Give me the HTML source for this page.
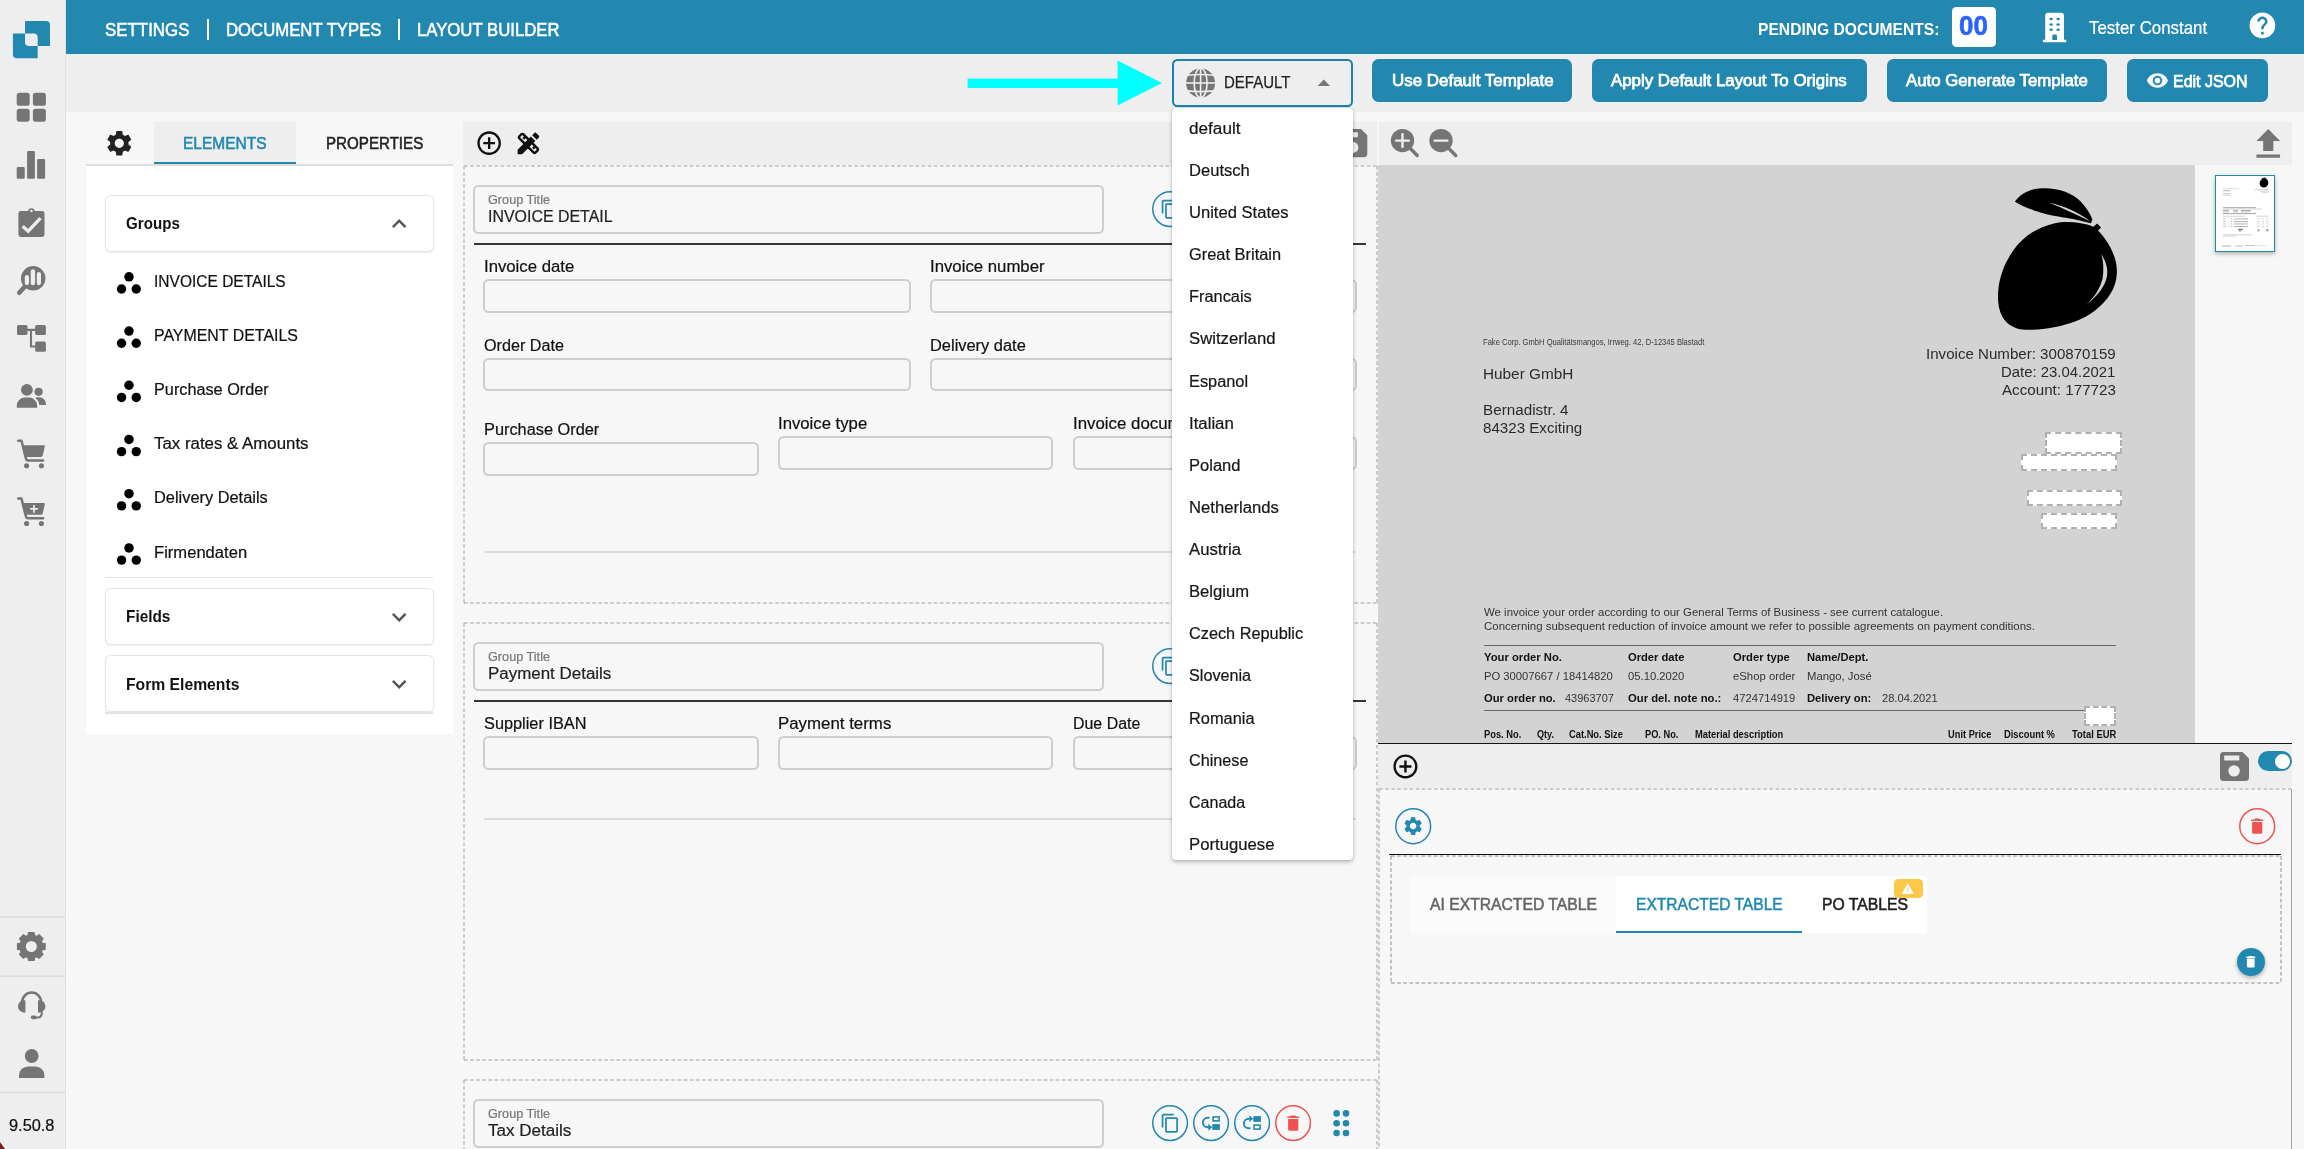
<!DOCTYPE html>
<html lang="en">
<head>
<meta charset="utf-8">
<title>Layout Builder</title>
<style>
*{box-sizing:border-box;margin:0;padding:0}
html,body{width:2304px;height:1149px;overflow:hidden;background:#f7f7f7;font-family:"Liberation Sans",sans-serif;color:#111}
.a{position:absolute}
.t{position:absolute;white-space:nowrap;line-height:1}
svg{position:absolute;overflow:visible}
#side{left:0;top:0;width:66px;height:1149px;background:#eeeeee;border-right:1.5px solid #e0e0e0}
#top{left:66px;top:0;width:2238px;height:54px;background:#2288b0}
#bar2{left:66px;top:54px;width:2238px;height:58px;background:#eeeeee}
.dash{position:absolute;border:1.4px dashed #bdbdbd}
.inp{position:absolute;border:2px solid #cecece;border-radius:5.5px}
</style>
</head>
<body>
<div id="root" class="a" style="left:0;top:0;width:2304px;height:1149px;will-change:transform">
<div id="side" class="a"></div>
<div id="top" class="a"></div>
<div id="bar2" class="a"></div>
<!-- sidebar -->
<svg style="left:0;top:0" width="66" height="1149" viewBox="0 0 66 1149">
<path fill="#2288b0" d="M25.3,21.1 H46 A4,4 0 0 1 50,25.1 V45.60000000000001 A0.3,0.3 0 0 1 49.7,45.900000000000006 H25.3 A0.3,0.3 0 0 1 25,45.60000000000001 V21.400000000000002 A0.3,0.3 0 0 1 25.3,21.1Z"/><path fill="#2288b0" d="M13.200000000000001,33.4 H37.400000000000006 A0.3,0.3 0 0 1 37.7,33.699999999999996 V57.900000000000006 A0.3,0.3 0 0 1 37.400000000000006,58.2 H16.9 A4,4 0 0 1 12.9,54.2 V33.699999999999996 A0.3,0.3 0 0 1 13.200000000000001,33.4Z"/><path fill="#eeeeee" d="M25.2,33.4 H33.7 A4,4 0 0 1 37.7,37.4 V45.699999999999996 A0.2,0.2 0 0 1 37.5,45.9 H29 A4,4 0 0 1 25,41.9 V33.6 A0.2,0.2 0 0 1 25.2,33.4Z"/>
<rect x="16.7" y="92.8" width="13" height="13" rx="2.6" fill="#757575"/><rect x="32.9" y="92.8" width="13" height="13" rx="2.6" fill="#757575"/><rect x="16.7" y="108.7" width="13" height="13" rx="2.6" fill="#757575"/><rect x="32.9" y="108.7" width="13" height="13" rx="2.6" fill="#757575"/>
<rect x="16.7" y="166.9" width="8" height="11.8" rx="1.2" fill="#757575"/><rect x="27.1" y="151" width="7.8" height="27.7" rx="1.2" fill="#757575"/><rect x="37.1" y="158.9" width="8" height="19.8" rx="1.2" fill="#757575"/>
<line x1="24.6" y1="286.8" x2="19.3" y2="292.7" stroke="#757575" stroke-width="4.6" stroke-linecap="round"/><circle cx="33.2" cy="278.3" r="12.25" fill="#757575"/><rect x="24.8" y="275" width="4.2" height="10.2" rx="2.1" fill="#eee"/><rect x="30.7" y="269.2" width="4.4" height="16" rx="2.2" fill="#eee"/><rect x="36.8" y="272" width="4.2" height="13.2" rx="2.1" fill="#eee"/>
<rect x="18.400" y="211.100" width="26.100" height="25.800" rx="2.400" fill="#757575"/><circle cx="31.400" cy="211.600" r="3.300" fill="#757575"/><circle cx="31.400" cy="211" r="1.250" fill="#eee"/><path d="M22.600 226.200 L28.200 231.200 L40.500 218.100" fill="none" stroke="#eee" stroke-width="3.300"/>
<rect x="17" y="325" width="10.500" height="10.100" rx="1.600" fill="#757575"/><rect x="35.200" y="325" width="10.700" height="10.100" rx="1.600" fill="#757575"/><rect x="35.200" y="341.400" width="10.700" height="10.400" rx="1.600" fill="#757575"/><path d="M27 329.850 H36 M31 329.850 V346.550 H36" fill="none" stroke="#757575" stroke-width="2.100"/>
<circle cx="26.9" cy="389.9" r="5.9" fill="#757575"/><path fill="#757575" d="M16.8 407.8 v-2.2 a8 8 0 0 1 8-8 h4.3 a8 8 0 0 1 8 8 v2.2z"/><circle cx="38.6" cy="391.8" r="4.1" fill="#757575"/><path fill="#757575" d="M35.2 397.9 c1.2-.5 2.4-.6 3.4-.6 h1 a6.3 6.3 0 0 1 6.3 6.3 v1.5 h-6.6 c0-3-1.600-5.600-4.100-7.200z"/>
<g transform="translate(0,0)"><path d="M18.2 440.700 h3.300 l4.400 17.600 q0.400 2.200 2.400 2.200 h14.800" fill="none" stroke="#757575" stroke-width="2.500" stroke-linecap="round" stroke-linejoin="round"/><path d="M21.700 445.200 h22 q1.400 0 1.100 1.400 l-2.100 9 q-0.400 1.400 -1.800 1.400 h-16.400z" fill="#757575"/><circle cx="26.600" cy="465.700" r="2.550" fill="#757575"/><circle cx="41.400" cy="465.700" r="2.550" fill="#757575"/></g><g transform="translate(0,57.8)"><path d="M18.2 440.700 h3.300 l4.400 17.600 q0.400 2.200 2.400 2.200 h14.800" fill="none" stroke="#757575" stroke-width="2.500" stroke-linecap="round" stroke-linejoin="round"/><path d="M21.700 445.200 h22 q1.400 0 1.100 1.400 l-2.100 9 q-0.400 1.400 -1.800 1.400 h-16.400z" fill="#757575"/><circle cx="26.600" cy="465.700" r="2.550" fill="#757575"/><circle cx="41.400" cy="465.700" r="2.550" fill="#757575"/><rect x="30.100" y="450.200" width="7.800" height="1.700" fill="#eee"/><rect x="33.150" y="447.150" width="1.700" height="7.800" fill="#eee"/></g>
<rect x="0" y="916.1" width="65" height="1.6" fill="#dcdcdc"/><rect x="0" y="975.5" width="65" height="1.6" fill="#dcdcdc"/><rect x="0" y="1091.6000000000001" width="65" height="1.6" fill="#dcdcdc"/><path fill="#757575" stroke="#757575" stroke-width="1.2" stroke-linejoin="round" fill-rule="evenodd" d="M28.03,935.47 L28.49,932.68 L34.11,932.68 L34.57,935.47 L36.79,936.39 L39.08,934.74 L43.06,938.72 L41.41,941.01 L42.33,943.23 L45.12,943.69 L45.12,949.31 L42.33,949.77 L41.41,951.99 L43.06,954.28 L39.08,958.26 L36.79,956.61 L34.57,957.53 L34.11,960.32 L28.49,960.32 L28.03,957.53 L25.81,956.61 L23.52,958.26 L19.54,954.28 L21.19,951.99 L20.27,949.77 L17.48,949.31 L17.48,943.69 L20.27,943.23 L21.19,941.01 L19.54,938.72 L23.52,934.74 L25.81,936.39Z M37.40,946.50 A6.1,6.1 0 1,0 25.20,946.50 A6.1,6.1 0 1,0 37.40,946.50Z"/>
<path fill="none" stroke="#757575" stroke-width="2.6" d="M22.200 1003.500 v-1.500 a9.450 9.450 0 0 1 18.900 0 v1.500"/><path fill="#757575" d="M25.400 1000.200 v12.200 h-1.800 a5.600 6.100 0 0 1 0 -12.200z M38 1000.200 v12.200 h1.800 a5.600 6.100 0 0 0 0 -12.200z"/><path fill="none" stroke="#757575" stroke-width="2.2" d="M41.700 1011.500 v2.300 a3.700 3.700 0 0 1 -3.700 3.700 h-3"/><rect x="30.800" y="1015.600" width="5.900" height="3.700" rx="1.800" fill="#757575"/>
<circle cx="31.7" cy="1056" r="6.9" fill="#757575"/><path fill="#757575" d="M19 1078 v-2.600 a9 9 0 0 1 9-9 h7.400 a9 9 0 0 1 9 9 v2.600z"/>
<path fill="#7a1c1c" d="M0 1142 L5 1149 L0 1149Z"/></svg>
<div class="t" style="top:1116px;font-size:16.72px;line-height:19px;color:#111;left:8.70px;transform:scaleX(0.9787);transform-origin:0 0;-webkit-text-stroke:0.22px;">9.50.8</div>
<!-- top bar -->
<div class="t" style="top:19px;font-size:19.11px;line-height:21px;color:#fff;-webkit-text-stroke:0.55px;left:105.20px;transform:scaleX(0.8832);transform-origin:0 0;">SETTINGS</div>
<div class="a" style="left:206.60px;top:19.40px;width:2.20px;height:20.60px;background:#fff"></div>
<div class="t" style="top:19px;font-size:19.11px;line-height:21px;color:#fff;-webkit-text-stroke:0.55px;left:225.50px;transform:scaleX(0.8751);transform-origin:0 0;">DOCUMENT TYPES</div>
<div class="a" style="left:398.00px;top:19.40px;width:2.20px;height:20.60px;background:#fff"></div>
<div class="t" style="top:19px;font-size:19.11px;line-height:21px;color:#fff;-webkit-text-stroke:0.55px;left:416.70px;transform:scaleX(0.8751);transform-origin:0 0;">LAYOUT BUILDER</div>
<div class="t" style="top:20px;font-size:17.01px;line-height:19px;color:#fff;font-weight:700;left:1757.90px;transform:scaleX(0.9194);transform-origin:0 0;">PENDING DOCUMENTS:</div>
<div class="a" style="left:1951.50px;top:6.90px;width:44.10px;height:40.20px;background:#fff;border-radius:4.5px"></div>
<div class="t" style="top:10px;font-size:27.91px;line-height:31px;color:#2962ff;font-weight:700;left:1959.10px;transform:scaleX(0.9309);transform-origin:0 0;-webkit-text-stroke:0.6px;">00</div>
<svg style="left:0;top:0" width="2304" height="54" viewBox="0 0 2304 54"><path fill="#fff" d="M2045.200 40.500 V15.800 a3 3 0 0 1 3-3 h12.800 a3 3 0 0 1 3 3 V40.500z"/><rect x="2042.800" y="39.700" width="23.600" height="2.500" rx="1.200" fill="#fff"/><ellipse cx="2051.1" cy="19" rx="1.750" ry="1.250" fill="#2288b0"/><ellipse cx="2051.1" cy="24.4" rx="1.750" ry="1.250" fill="#2288b0"/><ellipse cx="2051.1" cy="29.7" rx="1.750" ry="1.250" fill="#2288b0"/><ellipse cx="2058.1" cy="19" rx="1.750" ry="1.250" fill="#2288b0"/><ellipse cx="2058.1" cy="24.4" rx="1.750" ry="1.250" fill="#2288b0"/><ellipse cx="2058.1" cy="29.7" rx="1.750" ry="1.250" fill="#2288b0"/><path fill="#2288b0" d="M2052.300 39.900 v-4 a1.400 1.400 0 0 1 1.400-1.400 h1.900 a1.400 1.400 0 0 1 1.400 1.400 v4z"/></svg>
<div class="t" style="top:17px;font-size:18.46px;line-height:21px;color:#fff;left:2089.30px;transform:scaleX(0.9150);transform-origin:0 0;-webkit-text-stroke:0.22px;">Tester Constant</div>
<svg style="left:2246.60px;top:10.10px;" width="30.80" height="30.80" viewBox="0 0 24 24"><path fill="#fff" d="M12 2C6.480 2 2 6.480 2 12s4.480 10 10 10 10-4.480 10-10S17.520 2 12 2zm1 17h-2v-2h2v2zm2.070-7.750l-.9.92C13.450 12.900 13 13.500 13 15h-2v-.5c0-1.100.45-2.100 1.170-2.830l1.240-1.260c.37-.36.59-.86.59-1.410 0-1.100-.9-2-2-2s-2 .9-2 2H8c0-2.210 1.790-4 4-4s4 1.790 4 4c0 .88-.36 1.680-.93 2.250z"/></svg>
<!-- toolbar -->
<svg style="left:0;top:54px" width="2304" height="58" viewBox="0 54 2304 58"><rect x="967.6" y="78.6" width="152" height="9.4" fill="#00ffff"/><path d="M1117.6 60.600 L1162 83 L1117.6 105.400Z" fill="#00ffff"/></svg>
<div class="a" style="left:1172.00px;top:59.00px;width:180.80px;height:47.80px;border:2.2px solid #1a82ab;border-radius:5.5px;background:#eeeeee"></div>
<svg style="left:0;top:54px" width="2304" height="58" viewBox="0 54 2304 58"><circle cx="1200.6" cy="83.050" r="14.5" fill="#757575"/><g stroke="#eeeeee" stroke-width="1.6" fill="none"><line x1="1186" y1="83" x2="1215" y2="83"/><line x1="1200.6" y1="68" x2="1200.6" y2="98"/><path d="M1187 75.200 q13.600 -1.400 27.200 0"/><path d="M1187 90.900 q13.600 1.400 27.200 0"/><ellipse cx="1200.6" cy="83" rx="6.500" ry="14.700"/></g><path d="M1317.600 86 h12.400 l-6.200-6.500z" fill="#777"/></svg>
<div class="t" style="top:73px;font-size:17.05px;line-height:19px;color:#222;left:1223.60px;transform:scaleX(0.8797);transform-origin:0 0;-webkit-text-stroke:0.25px;">DEFAULT</div>
<div class="a" style="left:1372.00px;top:58.90px;width:200.30px;height:43.30px;background:#2288b0;border-radius:6.5px"></div>
<div class="t" style="top:71px;font-size:16.39px;line-height:18px;color:#fff;left:1391.60px;transform:scaleX(1.0339);transform-origin:0 0;-webkit-text-stroke:0.75px;">Use Default Template</div>
<div class="a" style="left:1592.00px;top:58.90px;width:274.80px;height:43.30px;background:#2288b0;border-radius:6.5px"></div>
<div class="t" style="top:71px;font-size:16.39px;line-height:18px;color:#fff;left:1611.00px;transform:scaleX(1.0293);transform-origin:0 0;-webkit-text-stroke:0.75px;">Apply Default Layout To Origins</div>
<div class="a" style="left:1886.50px;top:58.90px;width:220.80px;height:43.30px;background:#2288b0;border-radius:6.5px"></div>
<div class="t" style="top:71px;font-size:16.39px;line-height:18px;color:#fff;left:1905.70px;transform:scaleX(1.0255);transform-origin:0 0;-webkit-text-stroke:0.75px;">Auto Generate Template</div>
<div class="a" style="left:2127.00px;top:58.90px;width:141.00px;height:43.30px;background:#2288b0;border-radius:6.5px"></div>
<div class="t" style="top:72px;font-size:16.39px;line-height:18px;color:#fff;left:2173.30px;transform:scaleX(0.9750);transform-origin:0 0;-webkit-text-stroke:0.75px;">Edit JSON</div>
<svg style="left:2145.90px;top:69.30px;" width="23.00" height="23.00" viewBox="0 0 24 24"><path fill="#fff" d="M12 4.500C7 4.500 2.730 7.610 1 12c1.730 4.390 6 7.500 11 7.500s9.270-3.110 11-7.500c-1.730-4.390-6-7.500-11-7.500zM12 17c-2.760 0-5-2.240-5-5s2.240-5 5-5 5 2.240 5 5-2.240 5-5 5zm0-8c-1.660 0-3 1.340-3 3s1.340 3 3 3 3-1.340 3-3-1.340-3-3-3z"/></svg>
<!-- left panel -->
<div class="a" style="left:153.60px;top:122.00px;width:142.40px;height:42.60px;background:#eeeeee"></div>
<div class="a" style="left:153.60px;top:162.40px;width:142.40px;height:2.40px;background:#2288b0"></div>
<div class="a" style="left:86.00px;top:164.40px;width:367.00px;height:1.20px;background:#dddddd"></div>
<div class="a" style="left:86.00px;top:165.60px;width:367.20px;height:568.00px;background:#fff"></div>
<svg style="left:104.30px;top:127.90px;" width="30.60" height="30.60" viewBox="0 0 24 24"><path fill="#222" d="M19.14,12.94c0.04-0.3,0.06-0.61,0.06-0.94c0-0.32-0.02-0.64-0.07-0.94l2.03-1.58c0.18-0.14,0.23-0.41,0.12-0.61 l-1.92-3.32c-0.12-0.22-0.37-0.29-0.59-0.22l-2.39,0.96c-0.5-0.38-1.03-0.7-1.62-0.94L14.4,2.81c-0.04-0.24-0.24-0.41-0.48-0.41 h-3.84c-0.24,0-0.43,0.17-0.47,0.41L9.25,5.35C8.66,5.59,8.12,5.92,7.63,6.29L5.24,5.33c-0.22-0.08-0.47,0-0.59,0.22L2.74,8.87 C2.62,9.08,2.66,9.34,2.86,9.48l2.03,1.58C4.84,11.36,4.8,11.69,4.8,12s0.02,0.64,0.07,0.94l-2.03,1.58 c-0.18,0.14-0.23,0.41-0.12,0.61l1.92,3.32c0.12,0.22,0.37,0.29,0.59,0.22l2.39-0.96c0.5,0.38,1.03,0.7,1.62,0.94l0.36,2.54 c0.05,0.24,0.24,0.41,0.48,0.41h3.84c0.24,0,0.44-0.17,0.47-0.41l0.36-2.54c0.59-0.24,1.13-0.56,1.62-0.94l2.39,0.96 c0.22,0.08,0.47,0,0.59-0.22l1.92-3.32c0.12-0.22,0.07-0.47-0.12-0.61L19.14,12.94z M12,15.6c-1.98,0-3.6-1.62-3.6-3.6 s1.62-3.6,3.6-3.6s3.6,1.62,3.6,3.6S13.98,15.6,12,15.6z"/></svg>
<div class="t" style="top:134px;font-size:16.21px;line-height:18px;color:#2288b0;-webkit-text-stroke:0.55px;left:183.40px;transform:scaleX(0.9568);transform-origin:0 0;">ELEMENTS</div>
<div class="t" style="top:134px;font-size:16.21px;line-height:18px;color:#222;-webkit-text-stroke:0.55px;left:326.00px;transform:scaleX(0.9348);transform-origin:0 0;">PROPERTIES</div>
<div class="a" style="left:105.20px;top:195.30px;width:328.60px;height:57.20px;border:1.3px solid #e4e4e4;border-radius:5.5px;background:#fff;box-shadow:0 1px 1.5px rgba(0,0,0,.07)"></div>
<div class="t" style="top:213px;font-size:17.25px;line-height:20px;color:#111;font-weight:700;left:125.60px;transform:scaleX(0.8771);transform-origin:0 0;">Groups</div>
<svg style="left:391.60px;top:219.00px;" width="14.40" height="9.00" viewBox="6 8 12 7.41"><path fill="#555" d="M12 8l-6 6 1.410 1.410L12 10.830l4.590 4.580L18 14z"/></svg>
<div class="t" style="top:271px;font-size:17.25px;line-height:20px;color:#111;left:153.90px;transform:scaleX(0.8999);transform-origin:0 0;-webkit-text-stroke:0.22px;">INVOICE DETAILS</div>
<div class="t" style="top:325px;font-size:17.25px;line-height:20px;color:#111;left:153.90px;transform:scaleX(0.9229);transform-origin:0 0;-webkit-text-stroke:0.22px;">PAYMENT DETAILS</div>
<div class="t" style="top:379px;font-size:17.25px;line-height:20px;color:#111;left:153.90px;transform:scaleX(0.9420);transform-origin:0 0;-webkit-text-stroke:0.22px;">Purchase Order</div>
<div class="t" style="top:433px;font-size:17.25px;line-height:20px;color:#111;left:153.90px;transform:scaleX(0.9766);transform-origin:0 0;-webkit-text-stroke:0.22px;">Tax rates &amp; Amounts</div>
<div class="t" style="top:487px;font-size:17.25px;line-height:20px;color:#111;left:153.90px;transform:scaleX(0.9489);transform-origin:0 0;-webkit-text-stroke:0.22px;">Delivery Details</div>
<div class="t" style="top:542px;font-size:17.25px;line-height:20px;color:#111;left:153.90px;transform:scaleX(0.9614);transform-origin:0 0;-webkit-text-stroke:0.22px;">Firmendaten</div>
<svg style="left:0;top:0" width="460" height="740" viewBox="0 0 460 740"><circle cx="129" cy="276.80" r="4.75" fill="#000"/><circle cx="121.55" cy="289.00" r="4.7" fill="#000"/><circle cx="136.25" cy="289.00" r="4.7" fill="#000"/><circle cx="129" cy="331.02" r="4.75" fill="#000"/><circle cx="121.55" cy="343.22" r="4.7" fill="#000"/><circle cx="136.25" cy="343.22" r="4.7" fill="#000"/><circle cx="129" cy="385.24" r="4.75" fill="#000"/><circle cx="121.55" cy="397.44" r="4.7" fill="#000"/><circle cx="136.25" cy="397.44" r="4.7" fill="#000"/><circle cx="129" cy="439.46" r="4.75" fill="#000"/><circle cx="121.55" cy="451.66" r="4.7" fill="#000"/><circle cx="136.25" cy="451.66" r="4.7" fill="#000"/><circle cx="129" cy="493.68" r="4.75" fill="#000"/><circle cx="121.55" cy="505.88" r="4.7" fill="#000"/><circle cx="136.25" cy="505.88" r="4.7" fill="#000"/><circle cx="129" cy="547.90" r="4.75" fill="#000"/><circle cx="121.55" cy="560.10" r="4.7" fill="#000"/><circle cx="136.25" cy="560.10" r="4.7" fill="#000"/></svg>
<div class="a" style="left:105.00px;top:576.80px;width:328.00px;height:1.60px;background:#e2e2e2"></div>
<div class="a" style="left:105.20px;top:588.20px;width:328.60px;height:57.00px;border:1.3px solid #e4e4e4;border-radius:5.5px;background:#fff;box-shadow:0 1px 1.5px rgba(0,0,0,.07)"></div>
<div class="t" style="top:606px;font-size:17.25px;line-height:20px;color:#111;font-weight:700;left:125.60px;transform:scaleX(0.8907);transform-origin:0 0;">Fields</div>
<svg style="left:391.60px;top:612.60px;" width="14.40" height="8.90" viewBox="6 8.59 12 7.41"><path fill="#555" d="M16.590 8.590L12 13.170 7.410 8.590 6 10l6 6 6-6z"/></svg>
<div class="a" style="left:105.20px;top:655.40px;width:328.60px;height:56.80px;border:1.3px solid #e4e4e4;border-radius:5.5px;background:#fff;box-shadow:0 1px 1.5px rgba(0,0,0,.07)"></div>
<div class="t" style="top:674px;font-size:17.25px;line-height:20px;color:#111;font-weight:700;left:125.60px;transform:scaleX(0.9100);transform-origin:0 0;">Form Elements</div>
<svg style="left:391.60px;top:680.20px;" width="14.40" height="8.90" viewBox="6 8.59 12 7.41"><path fill="#555" d="M16.590 8.590L12 13.170 7.410 8.590 6 10l6 6 6-6z"/></svg>
<div class="a" style="left:105.00px;top:712.40px;width:328.00px;height:1.40px;background:#e2e2e2"></div>
<!-- center -->
<div class="a" style="left:463.00px;top:122.00px;width:914.40px;height:43.00px;background:#eeeeee"></div>
<svg style="left:475.05px;top:129.05px;" width="28.30" height="28.30" viewBox="0 0 24 24"><path fill="#111" d="M13 7h-2v4H7v2h4v4h2v-4h4v-2h-4V7zm-1-5C6.480 2 2 6.480 2 12s4.480 10 10 10 10-4.480 10-10S17.520 2 12 2zm0 18c-4.410 0-8-3.590-8-8s3.590-8 8-8 8 3.590 8 8-3.590 8-8 8z"/></svg>
<svg style="left:513.75px;top:128.75px;" width="28.90" height="28.90" viewBox="0 0 24 24"><path fill="#111" d="M16.24 11.51l1.570-1.570-3.750-3.750-1.570 1.570-4.140-4.130c-.78-.78-2.050-.78-2.830 0l-1.900 1.900c-.78.78-.78 2.050 0 2.830l4.130 4.130L3 17.250V21h3.750l4.760-4.760 4.130 4.130c.95.95 2.230.6 2.830 0l1.900-1.900c.78-.78.78-2.050 0-2.830l-4.130-4.130zm-7.060-.44L5.040 6.940l1.890-1.900L8.200 6.310 7.020 7.500l1.410 1.410 1.190-1.190 1.450 1.450-1.890 1.900zm7.880 7.890l-4.130-4.130 1.900-1.900 1.450 1.450-1.190 1.190 1.410 1.410 1.190-1.190 1.270 1.270-1.900 1.900zM20.710 7.040c.39-.39.39-1.020 0-1.410l-2.340-2.340c-.47-.47-1.120-.29-1.410 0l-1.830 1.830 3.750 3.750 1.830-1.830z"/></svg>
<svg style="left:1339.40px;top:129.00px" width="28.3" height="28.3" viewBox="1339.40 129.00 28.3 28.3"><path fill="#757575" d="M1342.86,129.00 H1361.41 L1367.70,135.29 V153.84 A3.46,3.46 0 0 1 1364.24,157.30 H1342.86 A3.46,3.46 0 0 1 1339.40,153.84 V132.46 A3.46,3.46 0 0 1 1342.86,129.00Z"/><rect x="1343.49" y="132.30" width="14.78" height="5.03" rx="0.5" fill="#eee"/><circle cx="1353.16" cy="147.40" r="5.58" fill="#eee"/></svg>
<svg style="left:463.50px;top:165.50px" width="913.00" height="437.00" viewBox="0 0 913.00 437.00"><g stroke="#a0a0a0" stroke-width="1" stroke-dasharray="3.7 2.4" fill="none"><line x1="0" y1="0" x2="913.00" y2="0"/><line x1="0" y1="437.00" x2="913.00" y2="437.00"/><line x1="0" y1="0" x2="0" y2="437.00"/><line x1="913.00" y1="0" x2="913.00" y2="437.00"/></g></svg>
<div class="inp" style="left:473.20px;top:185.10px;width:630.50px;height:48.60px;"></div>
<div class="t" style="top:193px;font-size:12.50px;line-height:14px;color:#777;left:488.40px;transform:scaleX(1.0140);transform-origin:0 0;-webkit-text-stroke:0.22px;">Group Title</div>
<div class="t" style="top:206px;font-size:17.25px;line-height:20px;color:#222;left:488.40px;transform:scaleX(0.9241);transform-origin:0 0;-webkit-text-stroke:0.22px;">INVOICE DETAIL</div>
<svg style="left:1150.90px;top:190.30px" width="38.20" height="38.20" viewBox="1150.90 190.30 38.20 38.20"><circle cx="1170" cy="209.4" r="17.35" fill="none" stroke="#2288b0" stroke-width="1.5"/></svg>
<svg style="left:1191.90px;top:190.30px" width="38.20" height="38.20" viewBox="1191.90 190.30 38.20 38.20"><circle cx="1211" cy="209.4" r="17.35" fill="none" stroke="#2288b0" stroke-width="1.5"/></svg>
<svg style="left:1232.90px;top:190.30px" width="38.20" height="38.20" viewBox="1232.90 190.30 38.20 38.20"><circle cx="1252" cy="209.4" r="17.35" fill="none" stroke="#2288b0" stroke-width="1.5"/></svg>
<svg style="left:1273.90px;top:190.30px" width="38.20" height="38.20" viewBox="1273.90 190.30 38.20 38.20"><circle cx="1293" cy="209.4" r="17.35" fill="none" stroke="#ef5350" stroke-width="1.5"/></svg>
<svg style="left:1159.95px;top:199.20px;" width="20.50" height="20.50" viewBox="0 0 24 24"><path fill="#2288b0" d="M16 1H4c-1.100 0-2 .9-2 2v14h2V3h12V1zm3 4H8c-1.100 0-2 .9-2 2v14c0 1.100.9 2 2 2h11c1.100 0 2-.9 2-2V7c0-1.100-.9-2-2-2zm0 16H8V7h11v14z"/></svg>
<svg style="left:1282.80px;top:199.30px;" width="20.40" height="20.40" viewBox="0 0 24 24"><path fill="#ef5350" d="M6 19c0 1.100.9 2 2 2h8c1.100 0 2-.9 2-2V7H6v12zM19 4h-3.500l-1-1h-5l-1 1H5v2h14V4z"/></svg>
<svg style="left:0;top:189.40px" width="1380" height="40" viewBox="0 189.40 1380 40"><g transform="translate(1211,209.4) scale(1,1)" fill="none" stroke="#2288b0"><path stroke-width="1.9" d="M-1.500,-5.300 h-1.800 a4.800 4.800 0 0 0 0,9.600 h2.300"/><path stroke="none" fill="#2288b0" d="M-2.600,0.800 L1.200,4.300 L-2.600,7.800Z"/><rect x="2.100" y="-6.100" width="6" height="4" stroke-width="1.600"/><rect x="1.300" y="1.100" width="7.600" height="5.800" fill="#2288b0" stroke="none"/></g><g transform="translate(1252,209.4) scale(1,-1)" fill="none" stroke="#2288b0"><path stroke-width="1.9" d="M-1.500,-5.300 h-1.800 a4.800 4.800 0 0 0 0,9.600 h2.300"/><path stroke="none" fill="#2288b0" d="M-2.600,0.800 L1.200,4.300 L-2.600,7.800Z"/><rect x="2.100" y="-6.100" width="6" height="4" stroke-width="1.600"/><rect x="1.300" y="1.100" width="7.600" height="5.800" fill="#2288b0" stroke="none"/></g><circle cx="1336.6" cy="199.8" r="3.3" fill="#2288b0"/><circle cx="1336.6" cy="209.6" r="3.3" fill="#2288b0"/><circle cx="1336.6" cy="219.4" r="3.3" fill="#2288b0"/><circle cx="1346" cy="199.8" r="3.3" fill="#2288b0"/><circle cx="1346" cy="209.6" r="3.3" fill="#2288b0"/><circle cx="1346" cy="219.4" r="3.3" fill="#2288b0"/></svg>
<div class="a" style="left:474.00px;top:242.90px;width:892.40px;height:1.90px;background:#363636"></div>
<div class="t" style="top:256px;font-size:17.25px;line-height:20px;color:#111;left:483.50px;transform:scaleX(0.9696);transform-origin:0 0;-webkit-text-stroke:0.22px;">Invoice date</div>
<div class="inp" style="left:483.05px;top:279.20px;width:427.55px;height:33.80px;"></div>
<div class="t" style="top:256px;font-size:17.25px;line-height:20px;color:#111;left:930.00px;transform:scaleX(0.9717);transform-origin:0 0;-webkit-text-stroke:0.22px;">Invoice number</div>
<div class="inp" style="left:929.55px;top:279.20px;width:427.25px;height:33.80px;"></div>
<div class="t" style="top:335px;font-size:17.25px;line-height:20px;color:#111;left:483.50px;transform:scaleX(0.9364);transform-origin:0 0;-webkit-text-stroke:0.22px;">Order Date</div>
<div class="inp" style="left:483.05px;top:357.50px;width:427.55px;height:33.80px;"></div>
<div class="t" style="top:335px;font-size:17.25px;line-height:20px;color:#111;left:930.00px;transform:scaleX(0.9516);transform-origin:0 0;-webkit-text-stroke:0.22px;">Delivery date</div>
<div class="inp" style="left:929.55px;top:357.50px;width:427.25px;height:33.80px;"></div>
<div class="t" style="top:419px;font-size:17.25px;line-height:20px;color:#111;left:483.50px;transform:scaleX(0.9469);transform-origin:0 0;-webkit-text-stroke:0.22px;">Purchase Order</div>
<div class="inp" style="left:483.05px;top:442.40px;width:275.65px;height:33.80px;"></div>
<div class="t" style="top:413px;font-size:17.25px;line-height:20px;color:#111;left:778.00px;transform:scaleX(0.9690);transform-origin:0 0;-webkit-text-stroke:0.22px;">Invoice type</div>
<div class="inp" style="left:777.55px;top:436.00px;width:275.65px;height:33.80px;"></div>
<div class="t" style="top:413px;font-size:17.25px;line-height:20px;color:#111;left:1073.00px;transform:scaleX(0.9763);transform-origin:0 0;-webkit-text-stroke:0.22px;">Invoice document</div>
<div class="inp" style="left:1072.55px;top:436.00px;width:284.25px;height:33.80px;"></div>
<div class="a" style="left:483.50px;top:550.80px;width:872.90px;height:2.00px;background:#dddddd"></div>
<svg style="left:463.50px;top:622.50px" width="913.00" height="437.00" viewBox="0 0 913.00 437.00"><g stroke="#a0a0a0" stroke-width="1" stroke-dasharray="3.7 2.4" fill="none"><line x1="0" y1="0" x2="913.00" y2="0"/><line x1="0" y1="437.00" x2="913.00" y2="437.00"/><line x1="0" y1="0" x2="0" y2="437.00"/><line x1="913.00" y1="0" x2="913.00" y2="437.00"/></g></svg>
<div class="inp" style="left:473.20px;top:642.10px;width:630.50px;height:48.60px;"></div>
<div class="t" style="top:650px;font-size:12.50px;line-height:14px;color:#777;left:488.40px;transform:scaleX(1.0140);transform-origin:0 0;-webkit-text-stroke:0.22px;">Group Title</div>
<div class="t" style="top:663px;font-size:17.25px;line-height:20px;color:#222;left:488.40px;transform:scaleX(0.9817);transform-origin:0 0;-webkit-text-stroke:0.22px;">Payment Details</div>
<svg style="left:1150.90px;top:647.30px" width="38.20" height="38.20" viewBox="1150.90 647.30 38.20 38.20"><circle cx="1170" cy="666.4" r="17.35" fill="none" stroke="#2288b0" stroke-width="1.5"/></svg>
<svg style="left:1191.90px;top:647.30px" width="38.20" height="38.20" viewBox="1191.90 647.30 38.20 38.20"><circle cx="1211" cy="666.4" r="17.35" fill="none" stroke="#2288b0" stroke-width="1.5"/></svg>
<svg style="left:1232.90px;top:647.30px" width="38.20" height="38.20" viewBox="1232.90 647.30 38.20 38.20"><circle cx="1252" cy="666.4" r="17.35" fill="none" stroke="#2288b0" stroke-width="1.5"/></svg>
<svg style="left:1273.90px;top:647.30px" width="38.20" height="38.20" viewBox="1273.90 647.30 38.20 38.20"><circle cx="1293" cy="666.4" r="17.35" fill="none" stroke="#ef5350" stroke-width="1.5"/></svg>
<svg style="left:1159.95px;top:656.20px;" width="20.50" height="20.50" viewBox="0 0 24 24"><path fill="#2288b0" d="M16 1H4c-1.100 0-2 .9-2 2v14h2V3h12V1zm3 4H8c-1.100 0-2 .9-2 2v14c0 1.100.9 2 2 2h11c1.100 0 2-.9 2-2V7c0-1.100-.9-2-2-2zm0 16H8V7h11v14z"/></svg>
<svg style="left:1282.80px;top:656.30px;" width="20.40" height="20.40" viewBox="0 0 24 24"><path fill="#ef5350" d="M6 19c0 1.100.9 2 2 2h8c1.100 0 2-.9 2-2V7H6v12zM19 4h-3.500l-1-1h-5l-1 1H5v2h14V4z"/></svg>
<svg style="left:0;top:646.40px" width="1380" height="40" viewBox="0 646.40 1380 40"><g transform="translate(1211,666.4) scale(1,1)" fill="none" stroke="#2288b0"><path stroke-width="1.9" d="M-1.500,-5.300 h-1.800 a4.800 4.800 0 0 0 0,9.600 h2.300"/><path stroke="none" fill="#2288b0" d="M-2.600,0.800 L1.200,4.300 L-2.600,7.800Z"/><rect x="2.100" y="-6.100" width="6" height="4" stroke-width="1.600"/><rect x="1.300" y="1.100" width="7.600" height="5.800" fill="#2288b0" stroke="none"/></g><g transform="translate(1252,666.4) scale(1,-1)" fill="none" stroke="#2288b0"><path stroke-width="1.9" d="M-1.500,-5.300 h-1.800 a4.800 4.800 0 0 0 0,9.600 h2.300"/><path stroke="none" fill="#2288b0" d="M-2.600,0.800 L1.200,4.300 L-2.600,7.800Z"/><rect x="2.100" y="-6.100" width="6" height="4" stroke-width="1.600"/><rect x="1.300" y="1.100" width="7.600" height="5.800" fill="#2288b0" stroke="none"/></g><circle cx="1336.6" cy="656.8" r="3.3" fill="#2288b0"/><circle cx="1336.6" cy="666.6" r="3.3" fill="#2288b0"/><circle cx="1336.6" cy="676.4" r="3.3" fill="#2288b0"/><circle cx="1346" cy="656.8" r="3.3" fill="#2288b0"/><circle cx="1346" cy="666.6" r="3.3" fill="#2288b0"/><circle cx="1346" cy="676.4" r="3.3" fill="#2288b0"/></svg>
<div class="a" style="left:474.00px;top:699.90px;width:892.40px;height:1.90px;background:#363636"></div>
<div class="t" style="top:713px;font-size:17.25px;line-height:20px;color:#111;left:483.50px;transform:scaleX(0.9460);transform-origin:0 0;-webkit-text-stroke:0.22px;">Supplier IBAN</div>
<div class="inp" style="left:483.05px;top:736.20px;width:275.65px;height:33.80px;"></div>
<div class="t" style="top:713px;font-size:17.25px;line-height:20px;color:#111;left:778.00px;transform:scaleX(0.9768);transform-origin:0 0;-webkit-text-stroke:0.22px;">Payment terms</div>
<div class="inp" style="left:777.55px;top:736.20px;width:275.65px;height:33.80px;"></div>
<div class="t" style="top:713px;font-size:17.25px;line-height:20px;color:#111;left:1073.00px;transform:scaleX(0.9235);transform-origin:0 0;-webkit-text-stroke:0.22px;">Due Date</div>
<div class="inp" style="left:1072.55px;top:736.20px;width:284.25px;height:33.80px;"></div>
<div class="a" style="left:483.50px;top:818.30px;width:872.90px;height:2.00px;background:#dddddd"></div>
<svg style="left:463.50px;top:1079.50px" width="913.00" height="81.00" viewBox="0 0 913.00 81.00"><g stroke="#a0a0a0" stroke-width="1" stroke-dasharray="3.7 2.4" fill="none"><line x1="0" y1="0" x2="913.00" y2="0"/><line x1="0" y1="0" x2="0" y2="81.00"/><line x1="913.00" y1="0" x2="913.00" y2="81.00"/></g></svg>
<div class="inp" style="left:473.20px;top:1099.10px;width:630.50px;height:48.60px;"></div>
<div class="t" style="top:1107px;font-size:12.50px;line-height:14px;color:#777;left:488.40px;transform:scaleX(1.0140);transform-origin:0 0;-webkit-text-stroke:0.22px;">Group Title</div>
<div class="t" style="top:1120px;font-size:17.25px;line-height:20px;color:#222;left:488.40px;transform:scaleX(0.9874);transform-origin:0 0;-webkit-text-stroke:0.22px;">Tax Details</div>
<svg style="left:1150.90px;top:1104.30px" width="38.20" height="38.20" viewBox="1150.90 1104.30 38.20 38.20"><circle cx="1170" cy="1123.4" r="17.35" fill="none" stroke="#2288b0" stroke-width="1.5"/></svg>
<svg style="left:1191.90px;top:1104.30px" width="38.20" height="38.20" viewBox="1191.90 1104.30 38.20 38.20"><circle cx="1211" cy="1123.4" r="17.35" fill="none" stroke="#2288b0" stroke-width="1.5"/></svg>
<svg style="left:1232.90px;top:1104.30px" width="38.20" height="38.20" viewBox="1232.90 1104.30 38.20 38.20"><circle cx="1252" cy="1123.4" r="17.35" fill="none" stroke="#2288b0" stroke-width="1.5"/></svg>
<svg style="left:1273.90px;top:1104.30px" width="38.20" height="38.20" viewBox="1273.90 1104.30 38.20 38.20"><circle cx="1293" cy="1123.4" r="17.35" fill="none" stroke="#ef5350" stroke-width="1.5"/></svg>
<svg style="left:1159.95px;top:1113.20px;" width="20.50" height="20.50" viewBox="0 0 24 24"><path fill="#2288b0" d="M16 1H4c-1.100 0-2 .9-2 2v14h2V3h12V1zm3 4H8c-1.100 0-2 .9-2 2v14c0 1.100.9 2 2 2h11c1.100 0 2-.9 2-2V7c0-1.100-.9-2-2-2zm0 16H8V7h11v14z"/></svg>
<svg style="left:1282.80px;top:1113.30px;" width="20.40" height="20.40" viewBox="0 0 24 24"><path fill="#ef5350" d="M6 19c0 1.100.9 2 2 2h8c1.100 0 2-.9 2-2V7H6v12zM19 4h-3.500l-1-1h-5l-1 1H5v2h14V4z"/></svg>
<svg style="left:0;top:1103.40px" width="1380" height="40" viewBox="0 1103.40 1380 40"><g transform="translate(1211,1123.4) scale(1,1)" fill="none" stroke="#2288b0"><path stroke-width="1.9" d="M-1.500,-5.300 h-1.800 a4.800 4.800 0 0 0 0,9.600 h2.300"/><path stroke="none" fill="#2288b0" d="M-2.600,0.800 L1.200,4.300 L-2.600,7.800Z"/><rect x="2.100" y="-6.100" width="6" height="4" stroke-width="1.600"/><rect x="1.300" y="1.100" width="7.600" height="5.800" fill="#2288b0" stroke="none"/></g><g transform="translate(1252,1123.4) scale(1,-1)" fill="none" stroke="#2288b0"><path stroke-width="1.9" d="M-1.500,-5.300 h-1.800 a4.800 4.800 0 0 0 0,9.600 h2.300"/><path stroke="none" fill="#2288b0" d="M-2.600,0.800 L1.200,4.300 L-2.600,7.800Z"/><rect x="2.100" y="-6.100" width="6" height="4" stroke-width="1.600"/><rect x="1.300" y="1.100" width="7.600" height="5.800" fill="#2288b0" stroke="none"/></g><circle cx="1336.6" cy="1113.8000000000002" r="3.3" fill="#2288b0"/><circle cx="1336.6" cy="1123.6000000000001" r="3.3" fill="#2288b0"/><circle cx="1336.6" cy="1133.4" r="3.3" fill="#2288b0"/><circle cx="1346" cy="1113.8000000000002" r="3.3" fill="#2288b0"/><circle cx="1346" cy="1123.6000000000001" r="3.3" fill="#2288b0"/><circle cx="1346" cy="1133.4" r="3.3" fill="#2288b0"/></svg>
<!-- right -->
<div class="a" style="left:1379.20px;top:122.00px;width:912.40px;height:43.00px;background:#eeeeee"></div>
<svg style="left:1380px;top:122px" width="100" height="43" viewBox="1380 122 100 43"><line x1="1409.5" y1="147.6" x2="1417.2" y2="155.5" stroke="#757575" stroke-width="3.4" stroke-linecap="round"/><circle cx="1402.5" cy="140.6" r="11.65" fill="#757575"/><rect x="1395.0" y="139.4" width="15" height="2.400" rx="0.8" fill="#eee"/><rect x="1401.3" y="133.1" width="2.400" height="15" rx="0.8" fill="#eee"/><line x1="1448" y1="147.6" x2="1455.7" y2="155.5" stroke="#757575" stroke-width="3.4" stroke-linecap="round"/><circle cx="1441" cy="140.6" r="11.65" fill="#757575"/><rect x="1433.5" y="139.4" width="15" height="2.400" rx="0.8" fill="#eee"/></svg>
<svg style="left:2247.75px;top:123.75px;" width="40.50" height="40.50" viewBox="0 0 24 24"><path fill="#757575" d="M9 16h6v-6h4l-7-7-7 7h4zm-4 2h14v2H5z"/></svg>
<div class="a" style="left:1377.80px;top:165.00px;width:817.60px;height:578.00px;background:#d3d3d3"></div>
<svg style="left:1990px;top:180px" width="140" height="160" viewBox="1990 180 140 160"><path fill="#000" d="M2093.500,226.800 C2103,234 2111,246 2114.800,258 C2118.500,270 2117.500,283 2110,294.500 C2102,306.500 2090,316 2075,321.500 C2060,327 2043,330 2026.800,329.800 C2016,330 2007,325 2002.500,317 C1998,309 1997.500,299 1998.300,290 C1999.500,277 2004.500,263 2013.200,250.500 C2022,238 2036,227.500 2053.900,223.400 C2066,221 2081,221.800 2093.500,226.800Z"/><path fill="#d3d3d3" d="M2101.400,254 C2106,262 2108,268 2107.100,275 C2106,284 2100,294 2086,305 C2095,297 2100,288 2102.500,279 C2104,270 2103.500,262 2101.400,254Z"/><path fill="#000" d="M2014.800,201.400 C2019,196 2023,193.500 2026.800,191.700 C2033,189 2039,188.300 2044.900,188.300 C2052,188.300 2059,189.500 2065.200,191.700 C2071,194 2077,197.500 2081.100,201.900 C2086,207 2090,213 2092.400,219.300 L2091,223.200 C2085,222 2080,220.500 2074.300,219.300 C2068,218.200 2063,217.500 2058.400,216.600 C2050,215 2043,213.500 2035.800,210.900 C2028,208.500 2021,205.500 2014.800,201.400Z"/><path fill="#d3d3d3" d="M2049.400,202.800 C2064,206 2078,212 2090.500,221.600 C2077,214.500 2063,208.500 2049.400,202.800Z"/><path fill="#000" d="M2090.200,229.800 L2097.200,223.600 L2101,227.400 L2094.500,234.400Z"/></svg>
<div class="t" style="top:338px;font-size:8.23px;line-height:9px;color:#3a3a3a;left:1483.10px;transform:scaleX(0.9227);transform-origin:0 0;">Fake Corp. GmbH Qualitätsmangos, Irrweg. 42, D-12345 Blastadt</div>
<div class="t" style="top:365px;font-size:15.50px;line-height:17px;color:#2b2b2b;left:1483.10px;transform:scaleX(0.9890);transform-origin:0 0;">Huber GmbH</div>
<div class="t" style="top:401px;font-size:15.50px;line-height:17px;color:#2b2b2b;left:1483.10px;transform:scaleX(0.9836);transform-origin:0 0;">Bernadistr. 4</div>
<div class="t" style="top:419px;font-size:15.50px;line-height:17px;color:#2b2b2b;left:1483.10px;transform:scaleX(0.9756);transform-origin:0 0;">84323 Exciting</div>
<div class="t" style="top:345px;font-size:15.50px;line-height:17px;color:#2b2b2b;left:1925.80px;transform:scaleX(0.9741);transform-origin:0 0;">Invoice Number: 300870159</div>
<div class="t" style="top:363px;font-size:15.50px;line-height:17px;color:#2b2b2b;left:2001.10px;transform:scaleX(0.9619);transform-origin:0 0;">Date: 23.04.2021</div>
<div class="t" style="top:381px;font-size:15.50px;line-height:17px;color:#2b2b2b;left:2001.60px;transform:scaleX(0.9790);transform-origin:0 0;">Account: 177723</div>
<div class="a" style="left:2045.00px;top:432.00px;width:76.80px;height:21.50px;background:#fff;border:2px dashed #b0b0b0"></div>
<div class="a" style="left:2021.00px;top:453.50px;width:96.00px;height:17.30px;background:#fff;border:2px dashed #b0b0b0"></div>
<div class="a" style="left:2027.00px;top:490.00px;width:94.80px;height:15.70px;background:#fff;border:2px dashed #b0b0b0"></div>
<div class="a" style="left:2041.20px;top:513.00px;width:75.80px;height:15.50px;background:#fff;border:2px dashed #b0b0b0"></div>
<div class="t" style="top:606px;font-size:11.53px;line-height:12px;color:#333;left:1483.60px;transform:scaleX(0.9916);transform-origin:0 0;">We invoice your order according to our General Terms of Business - see current catalogue.</div>
<div class="t" style="top:620px;font-size:11.53px;line-height:12px;color:#333;left:1483.60px;transform:scaleX(0.9939);transform-origin:0 0;">Concerning subsequent reduction of invoice amount we refer to possible agreements on payment conditions.</div>
<div class="a" style="left:1483.60px;top:644.50px;width:632.40px;height:1.10px;background:#666"></div>
<div class="t" style="top:651px;font-size:11.53px;line-height:12px;color:#111;font-weight:700;left:1483.60px;transform:scaleX(0.9767);transform-origin:0 0;">Your order No.</div>
<div class="t" style="top:651px;font-size:11.53px;line-height:12px;color:#111;font-weight:700;left:1628.00px;transform:scaleX(0.9707);transform-origin:0 0;">Order date</div>
<div class="t" style="top:651px;font-size:11.53px;line-height:12px;color:#111;font-weight:700;left:1732.60px;transform:scaleX(0.9741);transform-origin:0 0;">Order type</div>
<div class="t" style="top:651px;font-size:11.53px;line-height:12px;color:#111;font-weight:700;left:1806.60px;transform:scaleX(0.9679);transform-origin:0 0;">Name/Dept.</div>
<div class="t" style="top:670px;font-size:11.53px;line-height:12px;color:#333;left:1483.60px;transform:scaleX(0.9752);transform-origin:0 0;">PO 30007667 / 18414820</div>
<div class="t" style="top:670px;font-size:11.53px;line-height:12px;color:#333;left:1628.00px;transform:scaleX(0.9773);transform-origin:0 0;">05.10.2020</div>
<div class="t" style="top:670px;font-size:11.53px;line-height:12px;color:#333;left:1732.60px;transform:scaleX(0.9833);transform-origin:0 0;">eShop order</div>
<div class="t" style="top:670px;font-size:11.53px;line-height:12px;color:#333;left:1806.60px;transform:scaleX(0.9816);transform-origin:0 0;">Mango, José</div>
<div class="t" style="top:692px;font-size:11.53px;line-height:12px;color:#111;font-weight:700;left:1483.60px;transform:scaleX(0.9746);transform-origin:0 0;">Our order no.</div>
<div class="t" style="top:692px;font-size:11.53px;line-height:12px;color:#333;left:1565.40px;transform:scaleX(0.9551);transform-origin:0 0;">43963707</div>
<div class="t" style="top:692px;font-size:11.53px;line-height:12px;color:#111;font-weight:700;left:1628.00px;transform:scaleX(0.9786);transform-origin:0 0;">Our del. note no.:</div>
<div class="t" style="top:692px;font-size:11.53px;line-height:12px;color:#333;left:1732.60px;transform:scaleX(0.9731);transform-origin:0 0;">4724714919</div>
<div class="t" style="top:692px;font-size:11.53px;line-height:12px;color:#111;font-weight:700;left:1806.60px;transform:scaleX(0.9757);transform-origin:0 0;">Delivery on:</div>
<div class="t" style="top:692px;font-size:11.53px;line-height:12px;color:#333;left:1882.00px;transform:scaleX(0.9652);transform-origin:0 0;">28.04.2021</div>
<div class="a" style="left:1483.60px;top:710.10px;width:632.40px;height:1.10px;background:#666"></div>
<div class="a" style="left:2084.30px;top:706.30px;width:31.70px;height:19.40px;background:#fff;border:2px dashed #b0b0b0"></div>
<div class="t" style="top:729px;font-size:10.17px;line-height:11px;color:#111;font-weight:700;left:1483.60px;transform:scaleX(0.9192);transform-origin:0 0;">Pos. No.</div>
<div class="t" style="top:729px;font-size:10.17px;line-height:11px;color:#111;font-weight:700;left:1537.00px;transform:scaleX(0.8936);transform-origin:0 0;">Qty.</div>
<div class="t" style="top:729px;font-size:10.17px;line-height:11px;color:#111;font-weight:700;left:1569.40px;transform:scaleX(0.9188);transform-origin:0 0;">Cat.No. Size</div>
<div class="t" style="top:729px;font-size:10.17px;line-height:11px;color:#111;font-weight:700;left:1644.60px;transform:scaleX(0.9094);transform-origin:0 0;">PO. No.</div>
<div class="t" style="top:729px;font-size:10.17px;line-height:11px;color:#111;font-weight:700;left:1695.00px;transform:scaleX(0.9201);transform-origin:0 0;">Material description</div>
<div class="t" style="top:729px;font-size:10.17px;line-height:11px;color:#111;font-weight:700;left:1948.30px;transform:scaleX(0.9142);transform-origin:0 0;">Unit Price</div>
<div class="t" style="top:729px;font-size:10.17px;line-height:11px;color:#111;font-weight:700;left:2004.30px;transform:scaleX(0.9210);transform-origin:0 0;">Discount %</div>
<div class="t" style="top:729px;font-size:10.17px;line-height:11px;color:#111;font-weight:700;left:2071.70px;transform:scaleX(0.9261);transform-origin:0 0;">Total EUR</div>
<div class="a" style="left:2214.90px;top:174.70px;width:60.20px;height:77.10px;background:#fff;border:1.5px solid #2288b0;box-shadow:0 2px 4px rgba(0,0,0,.28)"></div>
<svg style="left:2215px;top:174px" width="60" height="78" viewBox="2215 174 60 78"><ellipse cx="2264" cy="183" rx="4.300" ry="4.600" fill="#000" transform="rotate(25 2264 183)"/><path d="M2261.200,179 q2.500,-2.600 6,-0.800 q-3,0.500 -6,0.800z" fill="#000"/><rect x="2223" y="188.2" width="16" height="0.9" fill="#ddd"/><rect x="2223" y="190.3" width="7" height="0.9" fill="#aaa"/><rect x="2223" y="193.2" width="7.5" height="0.9" fill="#ccc"/><rect x="2223" y="194.6" width="8" height="0.9" fill="#ccc"/><rect x="2254.5" y="189.2" width="14.0" height="0.9" fill="#ccc"/><rect x="2260" y="190.7" width="8.5" height="0.9" fill="#ccc"/><rect x="2262" y="192" width="6.5" height="0.9" fill="#d5d5d5"/><rect x="2223" y="207.3" width="33" height="0.9" fill="#999"/><rect x="2223" y="208.5" width="39" height="0.9" fill="#d0d0d0"/><rect x="2223" y="210.3" width="6" height="0.9" fill="#888"/><rect x="2233" y="210.3" width="5" height="0.9" fill="#888"/><rect x="2241" y="210.3" width="10" height="0.9" fill="#888"/><rect x="2223" y="211.6" width="6" height="0.9" fill="#ccc"/><rect x="2233" y="211.6" width="5" height="0.9" fill="#ccc"/><rect x="2241" y="211.6" width="9" height="0.9" fill="#ccc"/><rect x="2223" y="213.2" width="33" height="0.9" fill="#999"/><rect x="2223" y="215.7" width="22" height="0.9" fill="#ccc"/><rect x="2256" y="215.7" width="12.5" height="0.9" fill="#ccc"/><rect x="2223" y="218.5" width="3" height="0.9" fill="#bbb"/><rect x="2228" y="218.5" width="1" height="0.9" fill="#ccc"/><rect x="2231" y="218.5" width="1" height="0.9" fill="#aaa"/><rect x="2234" y="218.5" width="14" height="0.9" fill="#aaa"/><rect x="2257" y="218.5" width="2.5" height="0.9" fill="#ccc"/><rect x="2262" y="218.5" width="2" height="0.9" fill="#ccc"/><rect x="2266" y="218.5" width="2.5" height="0.9" fill="#ccc"/><rect x="2223" y="221.2" width="3" height="0.9" fill="#bbb"/><rect x="2228" y="221.2" width="1" height="0.9" fill="#ccc"/><rect x="2231" y="221.2" width="1" height="0.9" fill="#aaa"/><rect x="2234" y="221.2" width="14" height="0.9" fill="#aaa"/><rect x="2257" y="221.2" width="2.5" height="0.9" fill="#ccc"/><rect x="2262" y="221.2" width="2" height="0.9" fill="#ccc"/><rect x="2266" y="221.2" width="2.5" height="0.9" fill="#ccc"/><rect x="2223" y="223.5" width="3" height="0.9" fill="#bbb"/><rect x="2228" y="223.5" width="1" height="0.9" fill="#ccc"/><rect x="2231" y="223.5" width="1" height="0.9" fill="#aaa"/><rect x="2234" y="223.5" width="14" height="0.9" fill="#aaa"/><rect x="2257" y="223.5" width="2.5" height="0.9" fill="#ccc"/><rect x="2262" y="223.5" width="2" height="0.9" fill="#ccc"/><rect x="2266" y="223.5" width="2.5" height="0.9" fill="#ccc"/><rect x="2223" y="226" width="3" height="0.9" fill="#bbb"/><rect x="2228" y="226" width="1" height="0.9" fill="#ccc"/><rect x="2231" y="226" width="1" height="0.9" fill="#aaa"/><rect x="2234" y="226" width="14" height="0.9" fill="#aaa"/><rect x="2257" y="226" width="2.5" height="0.9" fill="#ccc"/><rect x="2262" y="226" width="2" height="0.9" fill="#ccc"/><rect x="2266" y="226" width="2.5" height="0.9" fill="#ccc"/><rect x="2238" y="228.7" width="5" height="1.4" fill="#888"/><rect x="2239" y="230.3" width="2" height="1" fill="#666"/><rect x="2257.5" y="229" width="2.0" height="2.4" fill="#aaa"/><rect x="2266" y="229" width="2.5" height="2.4" fill="#aaa"/><rect x="2223" y="234.4" width="29" height="0.9" fill="#ccc"/><rect x="2223" y="235.6" width="13" height="0.9" fill="#ccc"/><rect x="2222" y="245.3" width="9" height="1.6" fill="#ccc"/><rect x="2235" y="245.3" width="8" height="1.4" fill="#d0d0d0"/><rect x="2245" y="245" width="10" height="0.9" fill="#bbb"/><rect x="2256" y="245.3" width="11" height="0.9" fill="#ddd"/></svg>
<div class="a" style="left:1378.40px;top:744.00px;width:913.20px;height:44.00px;background:#eeeeee"></div>
<div class="a" style="left:1378.40px;top:742.60px;width:913.20px;height:1.70px;background:#151515"></div>
<svg style="left:1390.75px;top:751.55px;" width="28.90" height="28.90" viewBox="0 0 24 24"><path fill="#111" d="M13 7h-2v4H7v2h4v4h2v-4h4v-2h-4V7zm-1-5C6.480 2 2 6.480 2 12s4.480 10 10 10 10-4.480 10-10S17.520 2 12 2zm0 18c-4.410 0-8-3.590-8-8s3.590-8 8-8 8 3.590 8 8-3.590 8-8 8z"/></svg>
<svg style="left:2219.80px;top:751.50px" width="29" height="29" viewBox="2219.80 751.50 29 29"><path fill="#757575" d="M2223.34,751.50 H2242.36 L2248.80,757.94 V776.96 A3.54,3.54 0 0 1 2245.26,780.50 H2223.34 A3.54,3.54 0 0 1 2219.80,776.96 V755.04 A3.54,3.54 0 0 1 2223.34,751.50Z"/><rect x="2223.99" y="754.88" width="15.14" height="5.16" rx="0.5" fill="#eee"/><circle cx="2233.90" cy="770.35" r="5.72" fill="#eee"/></svg>
<div class="a" style="left:2258.20px;top:751.20px;width:34.00px;height:19.90px;background:#2288b0;border-radius:10px"></div>
<div class="a" style="left:2274.90px;top:753.50px;width:15.20px;height:15.20px;background:#fff;border-radius:50%"></div>
<svg style="left:1378.50px;top:788.50px" width="912.00" height="372.00" viewBox="0 0 912.00 372.00"><g stroke="#a0a0a0" stroke-width="1" stroke-dasharray="3.7 2.4" fill="none"><line x1="0" y1="0" x2="912.00" y2="0"/><line x1="0" y1="0" x2="0" y2="372.00"/></g></svg>
<div class="a" style="left:2290.80px;top:789.00px;width:1.20px;height:360.00px;background:#a6a6a6"></div>
<svg style="left:1394.10px;top:806.80px" width="38.40" height="38.40" viewBox="1394.10 806.80 38.40 38.40"><circle cx="1413.3" cy="826" r="17.45" fill="none" stroke="#2288b0" stroke-width="1.5"/></svg>
<svg style="left:1402.30px;top:814.90px;" width="22.20" height="22.20" viewBox="0 0 24 24"><path fill="#2288b0" d="M19.14,12.94c0.04-0.3,0.06-0.61,0.06-0.94c0-0.32-0.02-0.64-0.07-0.94l2.03-1.58c0.18-0.14,0.23-0.41,0.12-0.61 l-1.92-3.32c-0.12-0.22-0.37-0.29-0.59-0.22l-2.39,0.96c-0.5-0.38-1.03-0.7-1.62-0.94L14.4,2.81c-0.04-0.24-0.24-0.41-0.48-0.41 h-3.84c-0.24,0-0.43,0.17-0.47,0.41L9.25,5.35C8.66,5.59,8.12,5.92,7.63,6.29L5.24,5.33c-0.22-0.08-0.47,0-0.59,0.22L2.74,8.87 C2.62,9.08,2.66,9.34,2.86,9.48l2.03,1.58C4.84,11.36,4.8,11.69,4.8,12s0.02,0.64,0.07,0.94l-2.03,1.58 c-0.18,0.14-0.23,0.41-0.12,0.61l1.92,3.32c0.12,0.22,0.37,0.29,0.59,0.22l2.39-0.96c0.5,0.38,1.03,0.7,1.62,0.94l0.36,2.54 c0.05,0.24,0.24,0.41,0.48,0.41h3.84c0.24,0,0.44-0.17,0.47-0.41l0.36-2.54c0.59-0.24,1.13-0.56,1.62-0.94l2.39,0.96 c0.22,0.08,0.47,0,0.59-0.22l1.92-3.32c0.12-0.22,0.07-0.47-0.12-0.61L19.14,12.94z M12,15.6c-1.98,0-3.6-1.62-3.6-3.6 s1.62-3.6,3.6-3.6s3.6,1.62,3.6,3.6S13.98,15.6,12,15.6z"/></svg>
<svg style="left:2237.90px;top:806.80px" width="38.40" height="38.40" viewBox="2237.90 806.80 38.40 38.40"><circle cx="2257.1" cy="826" r="17.45" fill="none" stroke="#ef5350" stroke-width="1.5"/></svg>
<svg style="left:2246.90px;top:815.90px;" width="20.40" height="20.40" viewBox="0 0 24 24"><path fill="#ef5350" d="M6 19c0 1.100.9 2 2 2h8c1.100 0 2-.9 2-2V7H6v12zM19 4h-3.500l-1-1h-5l-1 1H5v2h14V4z"/></svg>
<svg style="left:1390.50px;top:855.50px" width="890.00" height="127.00" viewBox="0 0 890.00 127.00"><g stroke="#8c8c8c" stroke-width="1" stroke-dasharray="3.7 2.4" fill="none"><line x1="0" y1="0" x2="890.00" y2="0"/><line x1="0" y1="127.00" x2="890.00" y2="127.00"/><line x1="0" y1="0" x2="0" y2="127.00"/><line x1="890.00" y1="0" x2="890.00" y2="127.00"/></g></svg>
<div class="a" style="left:1389.40px;top:853.50px;width:891.60px;height:1.90px;background:#111"></div>
<div class="a" style="left:1410.00px;top:875.60px;width:205.60px;height:57.40px;background:#fbfbfb"></div>
<div class="a" style="left:1615.60px;top:875.60px;width:311.40px;height:57.40px;background:#fff"></div>
<div class="a" style="left:1615.60px;top:930.60px;width:186.00px;height:2.40px;background:#2288b0"></div>
<div class="t" style="top:895px;font-size:16.79px;line-height:19px;color:#666;-webkit-text-stroke:0.55px;left:1429.60px;transform:scaleX(0.9355);transform-origin:0 0;">AI EXTRACTED TABLE</div>
<div class="t" style="top:895px;font-size:16.79px;line-height:19px;color:#2288b0;-webkit-text-stroke:0.55px;left:1635.60px;transform:scaleX(0.9292);transform-origin:0 0;">EXTRACTED TABLE</div>
<div class="t" style="top:895px;font-size:16.79px;line-height:19px;color:#222;-webkit-text-stroke:0.55px;left:1821.70px;transform:scaleX(0.9372);transform-origin:0 0;">PO TABLES</div>
<div class="a" style="left:1893.70px;top:878.90px;width:28.90px;height:19.50px;background:#fdc748;border-radius:4.5px"></div>
<svg style="left:1901.20px;top:882.00px;" width="13.60" height="13.60" viewBox="0 0 24 24"><path fill="#fff" d="M1 21h22L12 2 1 21zm12-3h-2v-2h2v2zm0-4h-2v-4h2v4z"/></svg>
<div class="a" style="left:2236.60px;top:947.60px;width:28.80px;height:28.80px;background:#2288b0;border-radius:50%;box-shadow:0 2px 4px rgba(0,0,0,.3)"></div>
<svg style="left:2243.25px;top:954.25px;" width="15.50" height="15.50" viewBox="0 0 24 24"><path fill="#fff" d="M6 19c0 1.100.9 2 2 2h8c1.100 0 2-.9 2-2V7H6v12zM19 4h-3.500l-1-1h-5l-1 1H5v2h14V4z"/></svg>
<!-- menu -->
<div class="a" style="left:1172.00px;top:107.70px;width:180.80px;height:752.40px;background:#fff;border-radius:4px;box-shadow:0 2px 4px rgba(0,0,0,.26),0 0 2px rgba(0,0,0,.14)"></div>
<div class="t" style="top:118px;font-size:17.25px;line-height:20px;color:#161616;left:1189.20px;transform:scaleX(0.9943);transform-origin:0 0;-webkit-text-stroke:0.22px;">default</div>
<div class="t" style="top:160px;font-size:17.25px;line-height:20px;color:#161616;left:1189.20px;transform:scaleX(0.9608);transform-origin:0 0;-webkit-text-stroke:0.22px;">Deutsch</div>
<div class="t" style="top:202px;font-size:17.25px;line-height:20px;color:#161616;left:1189.20px;transform:scaleX(0.9608);transform-origin:0 0;-webkit-text-stroke:0.22px;">United States</div>
<div class="t" style="top:244px;font-size:17.25px;line-height:20px;color:#161616;left:1189.20px;transform:scaleX(0.9511);transform-origin:0 0;-webkit-text-stroke:0.22px;">Great Britain</div>
<div class="t" style="top:286px;font-size:17.25px;line-height:20px;color:#161616;left:1189.20px;transform:scaleX(0.9494);transform-origin:0 0;-webkit-text-stroke:0.22px;">Francais</div>
<div class="t" style="top:328px;font-size:17.25px;line-height:20px;color:#161616;left:1189.20px;transform:scaleX(0.9701);transform-origin:0 0;-webkit-text-stroke:0.22px;">Switzerland</div>
<div class="t" style="top:371px;font-size:17.25px;line-height:20px;color:#161616;left:1189.20px;transform:scaleX(0.9480);transform-origin:0 0;-webkit-text-stroke:0.22px;">Espanol</div>
<div class="t" style="top:413px;font-size:17.25px;line-height:20px;color:#161616;left:1189.20px;transform:scaleX(0.9732);transform-origin:0 0;-webkit-text-stroke:0.22px;">Italian</div>
<div class="t" style="top:455px;font-size:17.25px;line-height:20px;color:#161616;left:1189.20px;transform:scaleX(0.9588);transform-origin:0 0;-webkit-text-stroke:0.22px;">Poland</div>
<div class="t" style="top:497px;font-size:17.25px;line-height:20px;color:#161616;left:1189.20px;transform:scaleX(0.9654);transform-origin:0 0;-webkit-text-stroke:0.22px;">Netherlands</div>
<div class="t" style="top:539px;font-size:17.25px;line-height:20px;color:#161616;left:1189.20px;transform:scaleX(0.9704);transform-origin:0 0;-webkit-text-stroke:0.22px;">Austria</div>
<div class="t" style="top:581px;font-size:17.25px;line-height:20px;color:#161616;left:1189.20px;transform:scaleX(0.9643);transform-origin:0 0;-webkit-text-stroke:0.22px;">Belgium</div>
<div class="t" style="top:623px;font-size:17.25px;line-height:20px;color:#161616;left:1189.20px;transform:scaleX(0.9444);transform-origin:0 0;-webkit-text-stroke:0.22px;">Czech Republic</div>
<div class="t" style="top:665px;font-size:17.25px;line-height:20px;color:#161616;left:1189.20px;transform:scaleX(0.9385);transform-origin:0 0;-webkit-text-stroke:0.22px;">Slovenia</div>
<div class="t" style="top:708px;font-size:17.25px;line-height:20px;color:#161616;left:1189.20px;transform:scaleX(0.9488);transform-origin:0 0;-webkit-text-stroke:0.22px;">Romania</div>
<div class="t" style="top:750px;font-size:17.25px;line-height:20px;color:#161616;left:1189.20px;transform:scaleX(0.9401);transform-origin:0 0;-webkit-text-stroke:0.22px;">Chinese</div>
<div class="t" style="top:792px;font-size:17.25px;line-height:20px;color:#161616;left:1189.20px;transform:scaleX(0.9284);transform-origin:0 0;-webkit-text-stroke:0.22px;">Canada</div>
<div class="t" style="top:834px;font-size:17.25px;line-height:20px;color:#161616;left:1189.20px;transform:scaleX(0.9690);transform-origin:0 0;-webkit-text-stroke:0.22px;">Portuguese</div>
</div>
</body>
</html>
